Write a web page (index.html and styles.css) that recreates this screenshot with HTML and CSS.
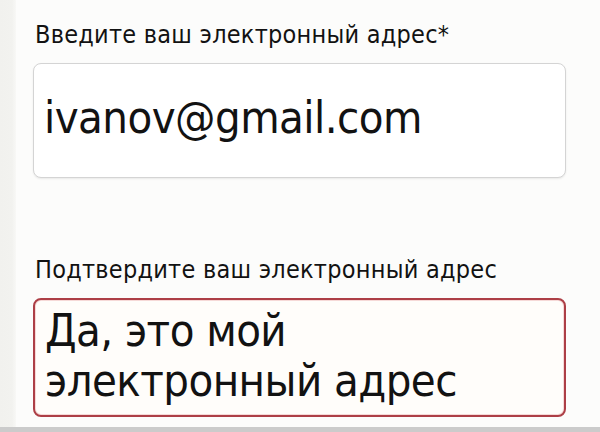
FILE: index.html
```html
<!DOCTYPE html>
<html lang="ru">
<head>
<meta charset="utf-8">
<title>Электронный адрес</title>
<link rel="stylesheet" href="styles.css">
</head>
<body>
<div class="page">
  <div class="strip"></div>
  <form class="form">
    <div class="field">
      <label class="label" for="email">Введите ваш электронный адрес*</label>
      <div class="box box-normal" id="email">ivanov@gmail.com</div>
    </div>
    <div class="field field-second">
      <label class="label" for="confirm">Подтвердите ваш электронный адрес</label>
      <div class="box box-error" id="confirm">Да, это мой<br>электронный адрес</div>
    </div>
  </form>
</div>
</body>
</html>
```
FILE: styles.css
```css
html, body {
  margin: 0;
  padding: 0;
  height: 100%;
}
body {
  background: #fcfcfb;
  font-family: "DejaVu Sans Condensed", "DejaVu Sans", sans-serif;
  color: #121212;
  overflow: hidden;
}
.page {
  display: flex;
  height: 432px;
  box-sizing: border-box;
  border-bottom: 5px solid #cbcbcb;
}
.strip {
  width: 16px;
  flex: none;
  background: linear-gradient(to right, #f1f1ee 0, #f2f2ef 12px, #f8f8f6 16px);
}
.form {
  flex: none;
  width: 533px;
  padding-left: 17px;
  padding-top: 21px;
  display: flex;
  flex-direction: column;
}
.field {
  display: flex;
  flex-direction: column;
  gap: 14px;
}
.field-second {
  margin-top: 78px;
}
.label {
  display: block;
  font-size: 25px;
  line-height: 28px;
  padding-left: 2px;
  letter-spacing: 0.25px;
  white-space: nowrap;
}
.box {
  box-sizing: border-box;
  font-size: 45px;
  line-height: 50px;
  letter-spacing: -0.55px;
  padding-left: 10px;
  white-space: nowrap;
}
.box-normal {
  height: 115px;
  padding-top: 29px;
  background: #ffffff;
  border: 1px solid #d4d4d4;
  border-radius: 8px;
  box-shadow: 0 1px 2px rgba(0, 0, 0, 0.08);
}
.box-error {
  height: 119px;
  padding-top: 6px;
  background: #fffdfa;
  border: 2px solid #ad3f46;
  border-radius: 8px;
  box-shadow: inset 0 0 0 1px rgba(230, 150, 150, 0.35);
}
```
